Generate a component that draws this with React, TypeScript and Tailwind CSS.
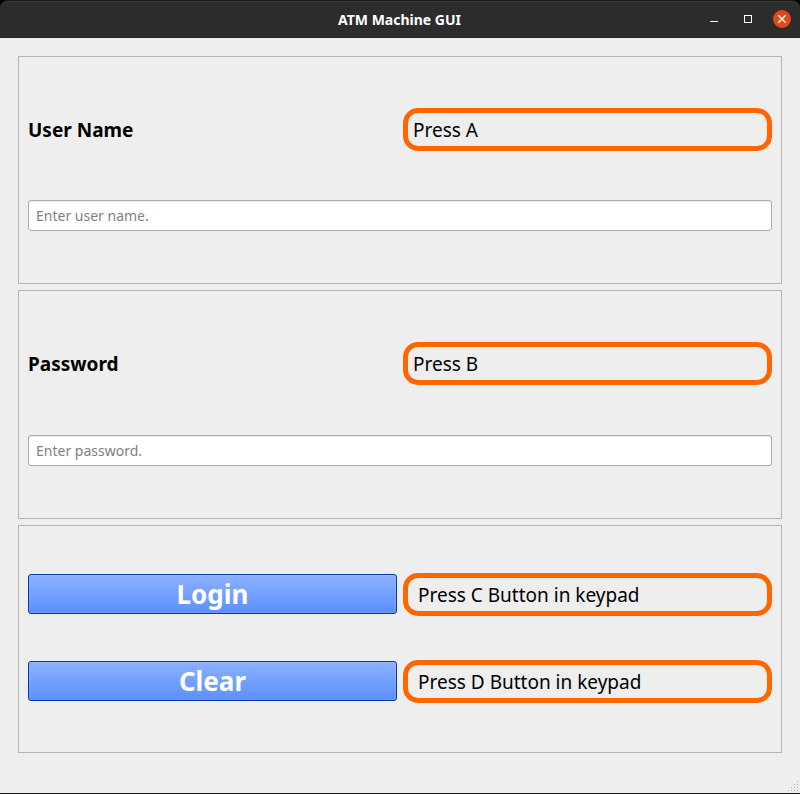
import type { ReactNode } from "react";

const PANEL = "flex flex-col justify-between border border-[#b4b4b4] px-[9px]";

function KeyHint({ children, indent = false }: { children: ReactNode; indent?: boolean }) {
  return (
    <p
      className={
        "h-[43px] rounded-[15px] border-[5px] border-[#ff6600] text-[19px] leading-[35px] whitespace-nowrap " +
        (indent ? "pl-[10px]" : "pl-[5px]")
      }
    >
      {children}
    </p>
  );
}

function Field(props: { id: string; label: string; hint: string; placeholder: string; type: string }) {
  return (
    <section className={PANEL + " pt-[51px] pb-[52px]"}>
      <div className="grid grid-cols-2 gap-[6px]">
        <label htmlFor={props.id} className="text-[19px] leading-[45px] font-bold">
          {props.label}
        </label>
        <KeyHint>{props.hint}</KeyHint>
      </div>
      <input
        id={props.id}
        type={props.type}
        placeholder={props.placeholder}
        className="h-[31px] w-full rounded-[3px] border border-[#ababab] bg-white px-[7px] text-[14px] shadow-[inset_0_1px_0_#ececec] outline-none placeholder:text-[#7f7f7f]"
      />
    </section>
  );
}

function Action({ label, hint }: { label: string; hint: string }) {
  return (
    <div className="grid grid-cols-2 items-center gap-[6px]">
      <button
        type="button"
        className="h-10 rounded-[3px] border border-[#0339a6] bg-linear-to-b from-[#8db1ff] to-[#5b8ffb] text-[26px] leading-[38px] font-bold text-white shadow-[inset_0_0_0_1px_rgba(255,255,255,0.1)]"
      >
        {label}
      </button>
      <KeyHint indent>{hint}</KeyHint>
    </div>
  );
}

function TitleBar() {
  return (
    <div className="bg-black">
      <header className="grid h-[38px] grid-cols-[1fr_auto_1fr] items-center rounded-t-[8px] border-t border-b border-t-[#191919] border-b-[#232323] bg-[#2c2c2c] pr-[9px] text-white shadow-[inset_0_1px_0_#3a3a3a]">
        <h1 className="col-start-2 pt-[2px] pl-2 text-[14px] leading-5 font-bold">ATM Machine GUI</h1>
        <div className="flex items-center justify-end gap-4">
          <button type="button" aria-label="Minimize" className="size-[18px]">
            <svg viewBox="0 0 18 18" className="size-[18px]">
              <rect x="5" y="11" width="8" height="1" fill="#fff" />
            </svg>
          </button>
          <button type="button" aria-label="Maximize" className="size-[18px]">
            <svg viewBox="0 0 18 18" className="size-[18px]">
              <rect x="5.5" y="5.5" width="7" height="7" fill="none" stroke="#fff" />
            </svg>
          </button>
          <button type="button" aria-label="Close" className="size-[18px]">
            <svg viewBox="0 0 18 18" className="size-[18px]">
              <circle cx="9" cy="9" r="9" fill="#e14a16" />
              <path d="M5.3 5.3 12.7 12.7M12.7 5.3 5.3 12.7" stroke="#fff" strokeWidth="1.3" />
            </svg>
          </button>
        </div>
      </header>
    </div>
  );
}

const GRIP_DOTS = [
  [9, 0],
  [6, 3], [9, 3],
  [3, 6], [6, 6], [9, 6],
  [0, 9], [3, 9], [6, 9], [9, 9],
];

export default function App() {
  return (
    <div className="relative flex min-h-screen flex-col border-b border-[#17171c] bg-[#eeeeee] font-['Noto_Sans',sans-serif] text-black">
      <TitleBar />
      <main className="flex flex-1 flex-col px-[18px] pt-[18px] pb-10">
        <form className="grid flex-1 auto-rows-fr gap-[6px]">
          <Field id="username" label="User Name" hint="Press A" placeholder="Enter user name." type="text" />
          <Field id="password" label="Password" hint="Press B" placeholder="Enter password." type="password" />
          <section className={PANEL + " pt-[47px] pb-[49px]"}>
            <Action label="Login" hint="Press C Button in keypad" />
            <Action label="Clear" hint="Press D Button in keypad" />
          </section>
        </form>
      </main>
      <svg viewBox="0 0 10 10" className="absolute right-[2px] bottom-[2px] size-[10px]" aria-hidden="true">
        {GRIP_DOTS.map(([x, y]) => (
          <rect key={`${x}-${y}`} x={x} y={y} width="1" height="1" fill="#b4b4b4" />
        ))}
      </svg>
    </div>
  );
}
